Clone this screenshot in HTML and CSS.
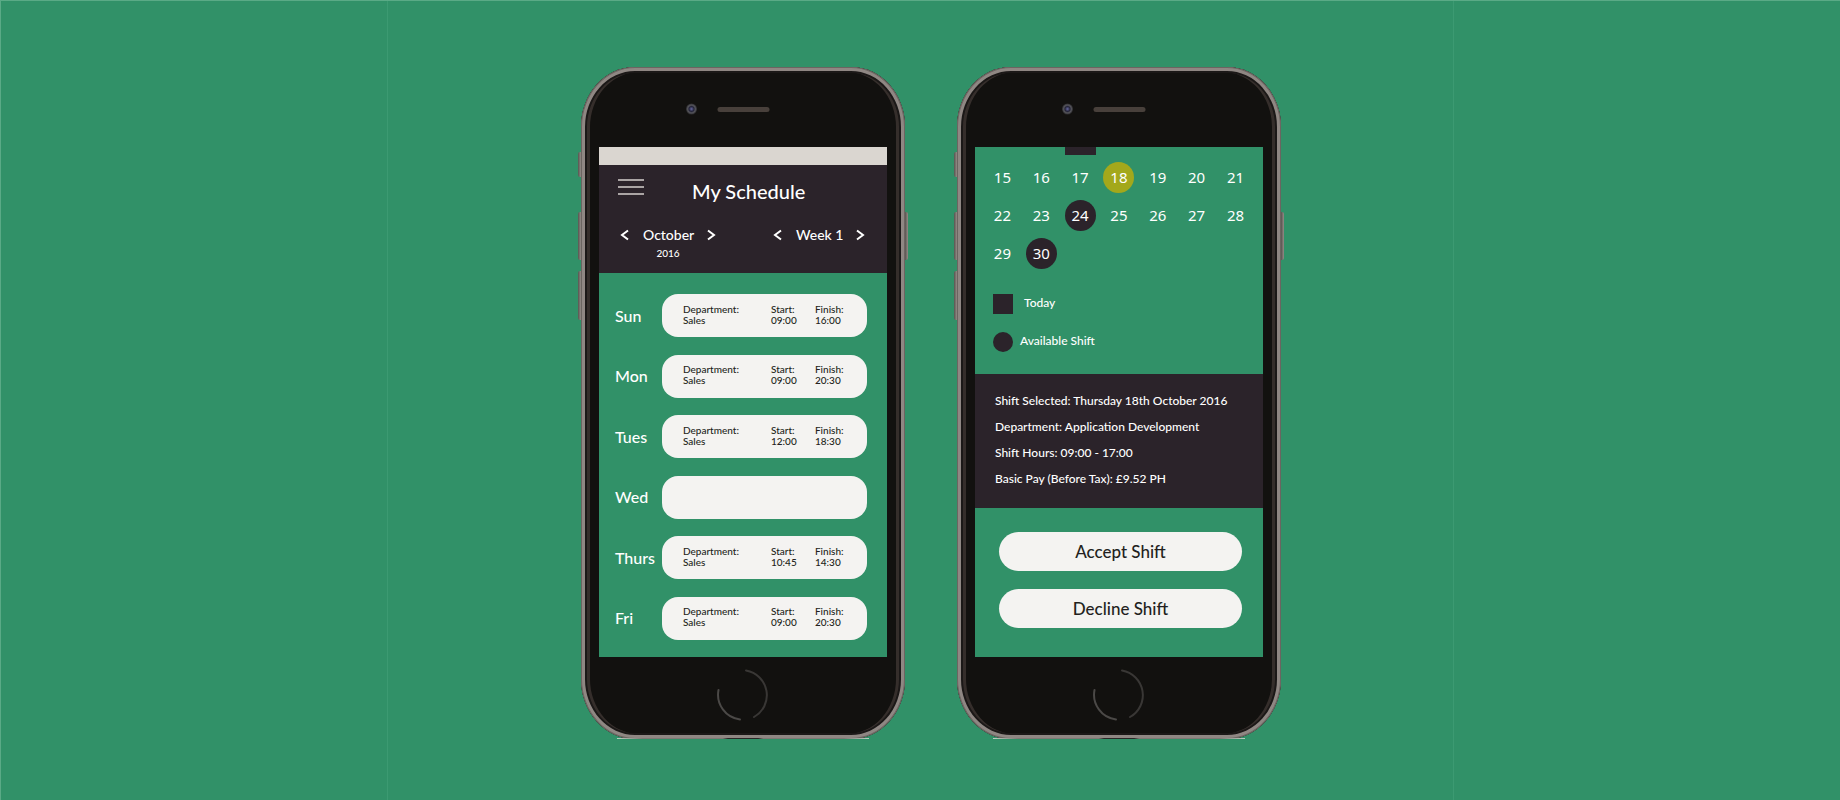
FILE: index.html
```html
<!DOCTYPE html>
<html lang="en">
<head>
<meta charset="utf-8">
<title>My Schedule</title>
<link rel="stylesheet" href="styles.css">
</head>
<body>
<svg class="defs" aria-hidden="true">
  <defs>
    <radialGradient id="lens"><stop offset="0" stop-color="#6668a0"/><stop offset=".45" stop-color="#25253a"/><stop offset=".7" stop-color="#55555a"/><stop offset="1" stop-color="#2c2b2e"/></radialGradient>
    <symbol id="prev" viewBox="0 0 10 12"><path d="M8 1.5 2 6l6 4.500" fill="none" stroke="currentColor" stroke-width="2"/></symbol>
    <symbol id="next" viewBox="0 0 10 12"><path d="M2 1.500 8 6l-6 4.500" fill="none" stroke="currentColor" stroke-width="2"/></symbol>
    <symbol id="front" viewBox="0 0 323 80"><circle cx="110" cy="42" r="5.500" fill="url(#lens)"/><rect x="136" y="40" width="52" height="5" rx="2.500" fill="#48403b"/></symbol>
    <symbol id="home" viewBox="0 0 52 52"><g fill="none" stroke-width="2" stroke-linecap="round"><path d="M29 1.500A25 25 0 0 1 37 48" stroke="#393735"/><path d="M1.500 21A25 25 0 0 0 23 50.500" stroke="#4b4947"/></g></symbol>
  </defs>
</svg>
<main class="stage">
  <section class="phone" aria-label="Schedule">
    <span class="side mute"></span><span class="side up"></span><span class="side down"></span><span class="side power"></span>
    <div class="phone-top"><svg class="front" aria-hidden="true"><use href="#front"/></svg></div>
    <div class="screen">
      <div class="status"></div>
      <header class="header">
        <div class="title-row">
          <button class="menu" aria-label="Menu"><span></span><span></span><span></span></button>
          <h1 class="title">My Schedule</h1>
        </div>
        <div class="pickers">
          <div class="picker">
            <button class="arrow" aria-label="Previous month"><svg><use href="#prev"/></svg></button>
            <span class="value">October</span>
            <button class="arrow" aria-label="Next month"><svg><use href="#next"/></svg></button>
            <span class="year">2016</span>
          </div>
          <div class="picker week">
            <button class="arrow" aria-label="Previous week"><svg><use href="#prev"/></svg></button>
            <span class="value">Week 1</span>
            <button class="arrow" aria-label="Next week"><svg><use href="#next"/></svg></button>
          </div>
        </div>
      </header>
      <div class="days">
        <div class="day"><h2>Sun</h2><div class="shift"><p>Department:<br>Sales</p><p>Start:<br>09:00</p><p>Finish:<br>16:00</p></div></div>
        <div class="day"><h2>Mon</h2><div class="shift"><p>Department:<br>Sales</p><p>Start:<br>09:00</p><p>Finish:<br>20:30</p></div></div>
        <div class="day"><h2>Tues</h2><div class="shift"><p>Department:<br>Sales</p><p>Start:<br>12:00</p><p>Finish:<br>18:30</p></div></div>
        <div class="day"><h2>Wed</h2><div class="shift"></div></div>
        <div class="day"><h2>Thurs</h2><div class="shift"><p>Department:<br>Sales</p><p>Start:<br>10:45</p><p>Finish:<br>14:30</p></div></div>
        <div class="day"><h2>Fri</h2><div class="shift"><p>Department:<br>Sales</p><p>Start:<br>09:00</p><p>Finish:<br>20:30</p></div></div>
      </div>
    </div>
    <div class="phone-bottom"><svg class="home" aria-hidden="true"><use href="#home"/></svg></div>
    <span class="edge-light"></span>
  </section>

  <section class="phone" aria-label="Available shifts">
    <span class="side mute"></span><span class="side up"></span><span class="side down"></span><span class="side power"></span>
    <div class="phone-top"><svg class="front" aria-hidden="true"><use href="#front"/></svg></div>
    <div class="screen">
      <table class="calendar">
        <tbody>
          <tr class="clipped"><td></td><td></td><td><span class="today-edge"></span></td><td></td><td></td><td></td><td></td></tr>
          <tr><td>15</td><td>16</td><td>17</td><td><span class="mark picked">18</span></td><td>19</td><td>20</td><td>21</td></tr>
          <tr><td>22</td><td>23</td><td><span class="mark">24</span></td><td>25</td><td>26</td><td>27</td><td>28</td></tr>
          <tr><td>29</td><td><span class="mark">30</span></td><td></td><td></td><td></td><td></td><td></td></tr>
        </tbody>
      </table>
      <ul class="legend">
        <li><span class="key square"></span>Today</li>
        <li><span class="key dot"></span>Available Shift</li>
      </ul>
      <div class="details">
        <p>Shift Selected: Thursday 18th October 2016</p>
        <p>Department: Application Development</p>
        <p>Shift Hours: 09:00 - 17:00</p>
        <p>Basic Pay (Before Tax): £9.52 PH</p>
      </div>
      <div class="actions">
        <button class="action">Accept Shift</button>
        <button class="action">Decline Shift</button>
      </div>
    </div>
    <div class="phone-bottom"><svg class="home" aria-hidden="true"><use href="#home"/></svg></div>
    <span class="edge-light"></span>
  </section>
</main>
</body>
</html>
```

FILE: styles.css
```css
* { box-sizing: border-box; }

body {
  margin: 0;
  min-height: 100vh;
  background: #319168;
  border-top: 1px solid #5aaa86;
  border-left: 1px solid #5aaa86;
  color: #fff;
  font-family: Lato, "Open Sans", sans-serif;
  font-weight: 500;
  display: flex;
  justify-content: center;
}

h1, h2, p, ul { margin: 0; padding: 0; font-weight: inherit; }
button { border: 0; padding: 0; background: none; color: inherit; font: inherit; cursor: pointer; }
.defs { position: absolute; width: 0; height: 0; }

.stage {
  width: 58%;
  min-width: 760px;
  padding: 66px 0 61px 21px;
  display: flex;
  justify-content: center;
  align-items: flex-start;
  gap: 52px;
  border: solid #3c9a72;
  border-width: 0 1px;
}

/* Phone body */
.phone {
  position: relative;
  width: 324px;
  border-radius: 54px / 60px;
  background: #12110f;
  box-shadow:
    inset 0 0 0 1px #6b6561,
    inset 0 0 0 4px #8f8783,
    inset 0 0 0 6px #1b1817,
    inset 4px 0 0 5px #352e2b,
    inset -4px 0 0 5px #352e2b;
  display: flex;
  flex-direction: column;
  align-items: stretch;
}
.side {
  position: absolute;
  left: -3px;
  width: 3px;
  border-radius: 2px 0 0 2px;
  background: linear-gradient(90deg, #57534f, #948c87);
}
.mute { top: 85px; height: 25px; }
.up { top: 145px; height: 48px; }
.down { top: 204px; height: 49px; }
.power { left: 100%; top: 145px; height: 48px; border-radius: 0 2px 2px 0; }
.edge-light {
  position: absolute;
  left: 36px;
  right: 36px;
  bottom: 0;
  height: 1px;
  background: linear-gradient(90deg, #b9cfc2, #7f7874 10%, #7f7874 42%, #2a2726 44%, #2a2726 56%, #7f7874 58%, #7f7874 90%, #b9cfc2);
}
.phone-top { height: 80px; }
.front { display: block; width: 100%; height: 100%; }
.phone-bottom {
  height: 82px;
  display: flex;
  justify-content: center;
  padding-top: 12px;
}
.home { width: 52px; height: 52px; }
.screen {
  min-height: 510px;
  margin: 0 18px;
  background: #319168;
  display: flex;
  flex-direction: column;
}

/* Schedule */
.status { height: 18px; background: #dad6d0; }
.header { height: 108px; padding: 13px 19px 0; background: #2b232a; }
.title-row { display: flex; align-items: flex-start; gap: 48px; }
.menu { width: 26px; padding-top: 1px; display: grid; gap: 5px; }
.menu span { height: 2px; background: #aaa4a4; }
.title { font-size: 20px; line-height: 26px; }
.pickers { display: flex; justify-content: space-between; padding: 21px 3px 0 2px; }
.picker {
  display: grid;
  grid-template-columns: 10px 50px 10px;
  column-gap: 13px;
  align-items: center;
  text-align: center;
}
.week { grid-template-columns: 10px 46px 10px; align-self: start; }
.value { font-size: 14px; line-height: 20px; white-space: nowrap; }
.year { grid-column: 2; font-size: 10px; line-height: 16px; }
.arrow { display: flex; }
.arrow svg { width: 10px; height: 12px; }

.days {
  flex: 1;
  padding: 21px 20px 17px 16px;
  display: flex;
  flex-direction: column;
  justify-content: space-between;
}
.day { display: grid; grid-template-columns: 47px 1fr; align-items: center; }
.day h2 { font-size: 16px; line-height: 20px; }
.shift {
  height: 43px;
  padding: 0 0 2px 21px;
  border-radius: 16px;
  background: #f4f3f1;
  color: #231f20;
  font-size: 10px;
  line-height: 11px;
  display: grid;
  grid-template-columns: 88px 44px 1fr;
  align-items: center;
}

/* Available shifts */
.calendar {
  width: calc(100% - 16px);
  margin: 0 8px;
  border-collapse: collapse;
  table-layout: fixed;
  font: 400 15px/31px "Noto Sans", sans-serif;
  text-align: center;
}
.calendar td { height: 38px; padding: 0; }
.calendar .clipped td { height: 11px; line-height: 0; vertical-align: top; }
.today-edge { display: inline-block; width: 31px; height: 8px; background: #2b232a; }
.mark { display: inline-block; width: 31px; height: 31px; border-radius: 50%; background: #2b232a; vertical-align: middle; }
.picked { background: #a3a81b; }

.legend {
  list-style: none;
  padding: 22px 18px;
  display: grid;
  gap: 18px;
  font-size: 12px;
  line-height: 17px;
}
.legend li { display: flex; }
.key { width: 20px; height: 20px; background: #2b232a; }
.square { margin-right: 11px; }
.dot { margin-right: 7px; border-radius: 50%; }

.details { padding: 14px 20px 16px; background: #2b232a; font-size: 12px; line-height: 26px; white-space: nowrap; }
.actions { padding: 24px 21px 28px 24px; display: grid; gap: 18px; }
.action {
  height: 39px;
  border-radius: 20px;
  background: #f4f3f1;
  color: #231f20;
  font-size: 17px;
}
```
